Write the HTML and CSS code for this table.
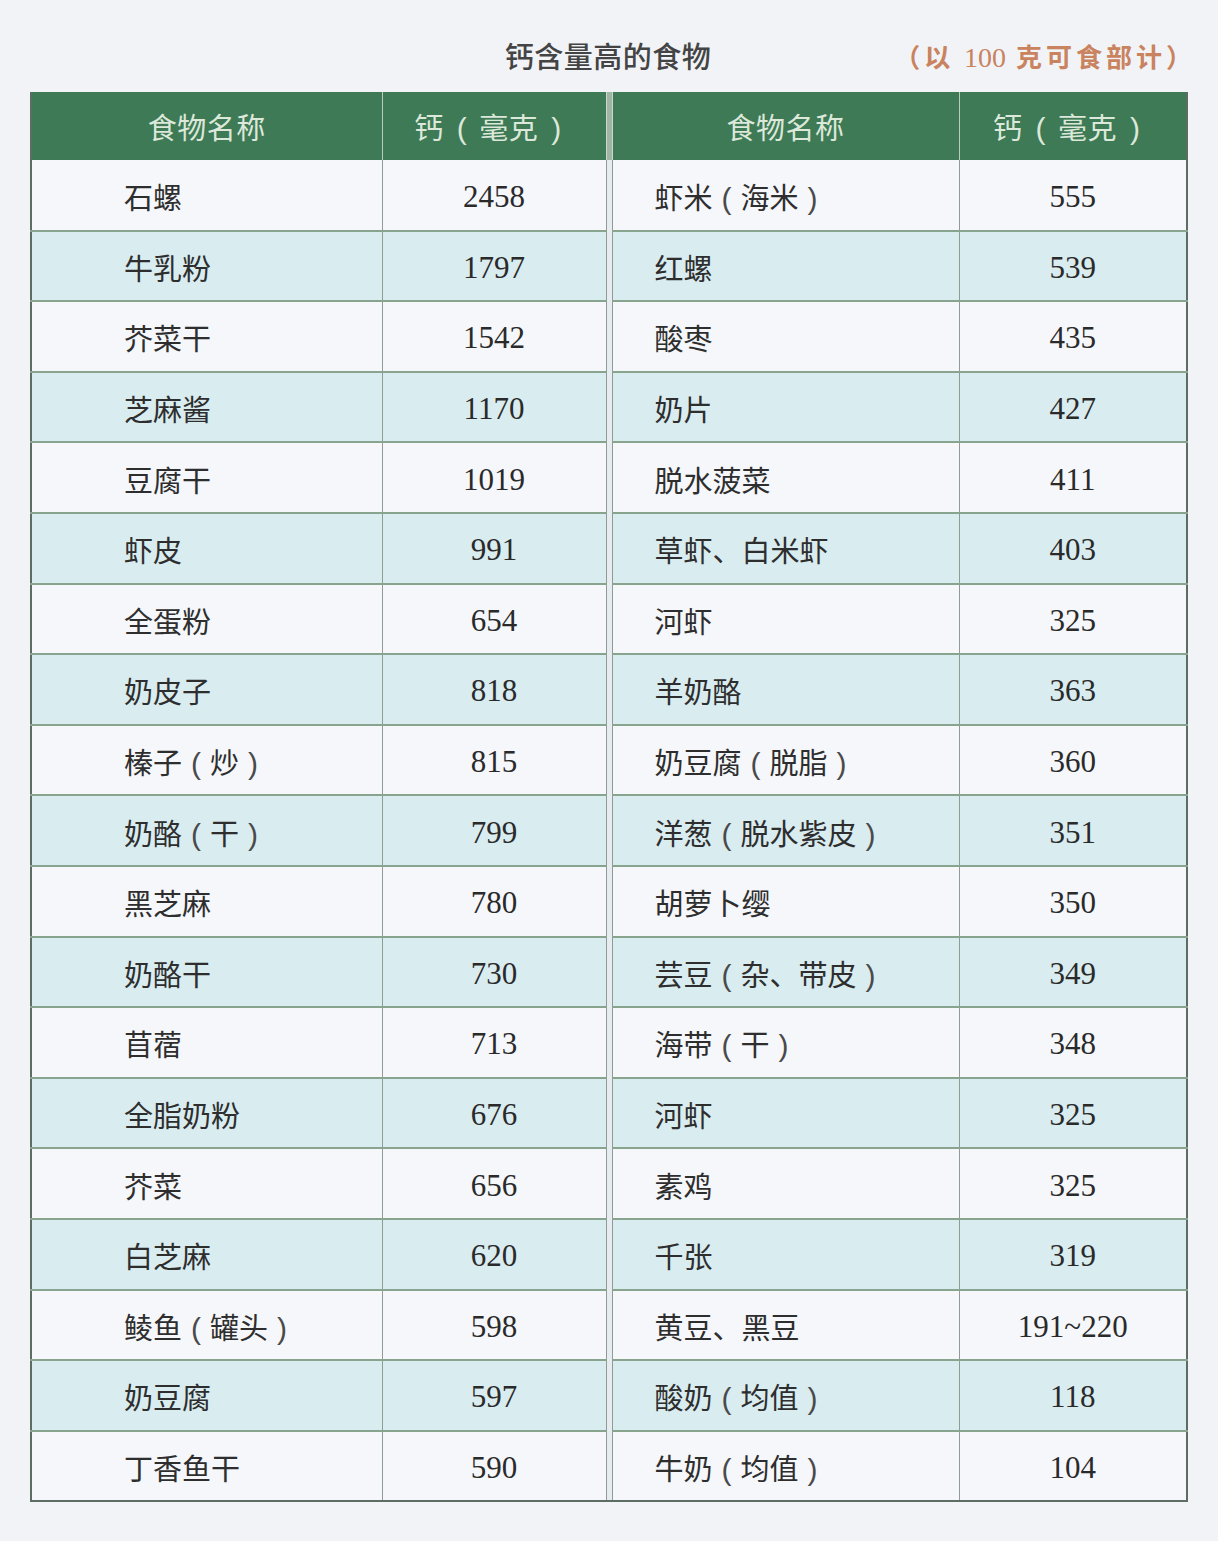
FILE: index.html
```html
<!DOCTYPE html>
<html lang="zh-CN">
<head>
<meta charset="utf-8">
<title>钙含量高的食物</title>
<link rel="stylesheet" href="styles.css">
</head>
<body>
<div class="page">
  <div class="caption">
    <span></span>
    <h1 class="title">钙含量高的食物</h1>
    <span class="note">（以 <span class="num">100</span> 克可食部计）</span>
  </div>
  <table class="calc">
    <colgroup>
      <col class="c-name1"><col class="c-num1"><col class="c-div"><col class="c-name2"><col class="c-num2">
    </colgroup>
    <thead>
      <tr>
        <th>食物名称</th><th>钙<span class="p">(</span>毫克<span class="p">)</span></th><th class="div"></th><th>食物名称</th><th>钙<span class="p">(</span>毫克<span class="p">)</span></th>
      </tr>
    </thead>
    <tbody>
      <tr><td class="n1">石螺</td><td class="v">2458</td><td class="div"></td><td class="n2">虾米<span class="p">(</span>海米<span class="p">)</span></td><td class="v">555</td></tr>
      <tr><td class="n1">牛乳粉</td><td class="v">1797</td><td class="div"></td><td class="n2">红螺</td><td class="v">539</td></tr>
      <tr><td class="n1">芥菜干</td><td class="v">1542</td><td class="div"></td><td class="n2">酸枣</td><td class="v">435</td></tr>
      <tr><td class="n1">芝麻酱</td><td class="v">1170</td><td class="div"></td><td class="n2">奶片</td><td class="v">427</td></tr>
      <tr><td class="n1">豆腐干</td><td class="v">1019</td><td class="div"></td><td class="n2">脱水菠菜</td><td class="v">411</td></tr>
      <tr><td class="n1">虾皮</td><td class="v">991</td><td class="div"></td><td class="n2">草虾、白米虾</td><td class="v">403</td></tr>
      <tr><td class="n1">全蛋粉</td><td class="v">654</td><td class="div"></td><td class="n2">河虾</td><td class="v">325</td></tr>
      <tr><td class="n1">奶皮子</td><td class="v">818</td><td class="div"></td><td class="n2">羊奶酪</td><td class="v">363</td></tr>
      <tr><td class="n1">榛子<span class="p">(</span>炒<span class="p">)</span></td><td class="v">815</td><td class="div"></td><td class="n2">奶豆腐<span class="p">(</span>脱脂<span class="p">)</span></td><td class="v">360</td></tr>
      <tr><td class="n1">奶酪<span class="p">(</span>干<span class="p">)</span></td><td class="v">799</td><td class="div"></td><td class="n2">洋葱<span class="p">(</span>脱水紫皮<span class="p">)</span></td><td class="v">351</td></tr>
      <tr><td class="n1">黑芝麻</td><td class="v">780</td><td class="div"></td><td class="n2">胡萝卜缨</td><td class="v">350</td></tr>
      <tr><td class="n1">奶酪干</td><td class="v">730</td><td class="div"></td><td class="n2">芸豆<span class="p">(</span>杂、带皮<span class="p">)</span></td><td class="v">349</td></tr>
      <tr><td class="n1">苜蓿</td><td class="v">713</td><td class="div"></td><td class="n2">海带<span class="p">(</span>干<span class="p">)</span></td><td class="v">348</td></tr>
      <tr><td class="n1">全脂奶粉</td><td class="v">676</td><td class="div"></td><td class="n2">河虾</td><td class="v">325</td></tr>
      <tr><td class="n1">芥菜</td><td class="v">656</td><td class="div"></td><td class="n2">素鸡</td><td class="v">325</td></tr>
      <tr><td class="n1">白芝麻</td><td class="v">620</td><td class="div"></td><td class="n2">千张</td><td class="v">319</td></tr>
      <tr><td class="n1">鲮鱼<span class="p">(</span>罐头<span class="p">)</span></td><td class="v">598</td><td class="div"></td><td class="n2">黄豆、黑豆</td><td class="v">191~220</td></tr>
      <tr><td class="n1">奶豆腐</td><td class="v">597</td><td class="div"></td><td class="n2">酸奶<span class="p">(</span>均值<span class="p">)</span></td><td class="v">118</td></tr>
      <tr><td class="n1">丁香鱼干</td><td class="v">590</td><td class="div"></td><td class="n2">牛奶<span class="p">(</span>均值<span class="p">)</span></td><td class="v">104</td></tr>
    </tbody>
  </table>
</div>
</body>
</html>
```

FILE: styles.css
```css
html, body {
  margin: 0;
  padding: 0;
  background: #f1f3f7;
}

.page {
  width: 1218px;
  height: 1541px;
  box-sizing: border-box;
  padding: 0 32px 0 30px;
  font-family: "Noto Sans CJK SC", "Noto Sans", sans-serif;
  color: #2f2f2f;
}

.caption {
  height: 92px;
  display: grid;
  grid-template-columns: 1fr auto 1fr;
  align-items: center;
  padding-top: 18px;
  box-sizing: border-box;
}

.title {
  margin: 0;
  font-size: 29px;
  font-weight: 500;
  color: #444444;
  letter-spacing: 0.5px;
}

.note {
  justify-self: end;
  margin-right: -10px;
  font-size: 26px;
  font-weight: 700;
  color: #c9835e;
  letter-spacing: 4px;
}

.note .num {
  font-family: "Liberation Serif", serif;
  font-weight: 400;
  font-size: 28px;
  letter-spacing: 0;
}

.p {
  display: inline-block;
  font-family: "Liberation Sans", sans-serif;
  font-weight: 400;
  font-size: 30px;
  margin: 0 9px;
  color: #4a4a4a;
}

.calc {
  width: 1156px;
  border-collapse: collapse;
  table-layout: fixed;
  border: 2px solid #5d6d63;
  border-top: none;
}

.c-name1 { width: 351px; }
.c-num1 { width: 224px; }
.c-div { width: 6px; }
.c-name2 { width: 347px; }
.c-num2 { width: 228px; }

.calc thead tr {
  height: 68px;
  background: #3e7a55;
}

.calc th {
  font-weight: 400;
  font-size: 29px;
  color: #dce8da;
  padding: 0;
  border-left: 1px solid #b9ccbd;
  text-align: center;
  letter-spacing: 0.5px;
}

.calc th .p {
  margin: 0 12px 0 13px;
  color: #dce8da;
}

.calc th:first-child { border-left: none; }

.calc th.div {
  background: #9fb5a6;
  border-left: 1px solid #c9d6cc;
  border-right: 1px solid #c9d6cc;
}

.calc tbody tr {
  height: 70.6px;
  background: #f5f7fb;
}

.calc tbody tr:nth-child(even) {
  background: #d9ecf0;
}

.calc td {
  padding: 2px 0 0;
  font-size: 29px;
  color: #2e2e2e;
  border-top: 2px solid #88a48e;
  border-left: 1px solid #8f9c95;
}

.calc td:first-child { border-left: none; }

.calc tbody tr:first-child td { border-top: none; }

.calc td.n1 { padding-left: 92px; }
.calc td.n2 { padding-left: 42px; }

.calc td.v {
  text-align: center;
  font-family: "Liberation Serif", serif;
  font-size: 31px;
  padding-top: 4px;
  color: #2a2a2a;
}

.calc td.div {
  background: #e6ecef;
  border-top: none;
  border-left: 1px solid #8f9c95;
  border-right: 1px solid #8f9c95;
}
```
